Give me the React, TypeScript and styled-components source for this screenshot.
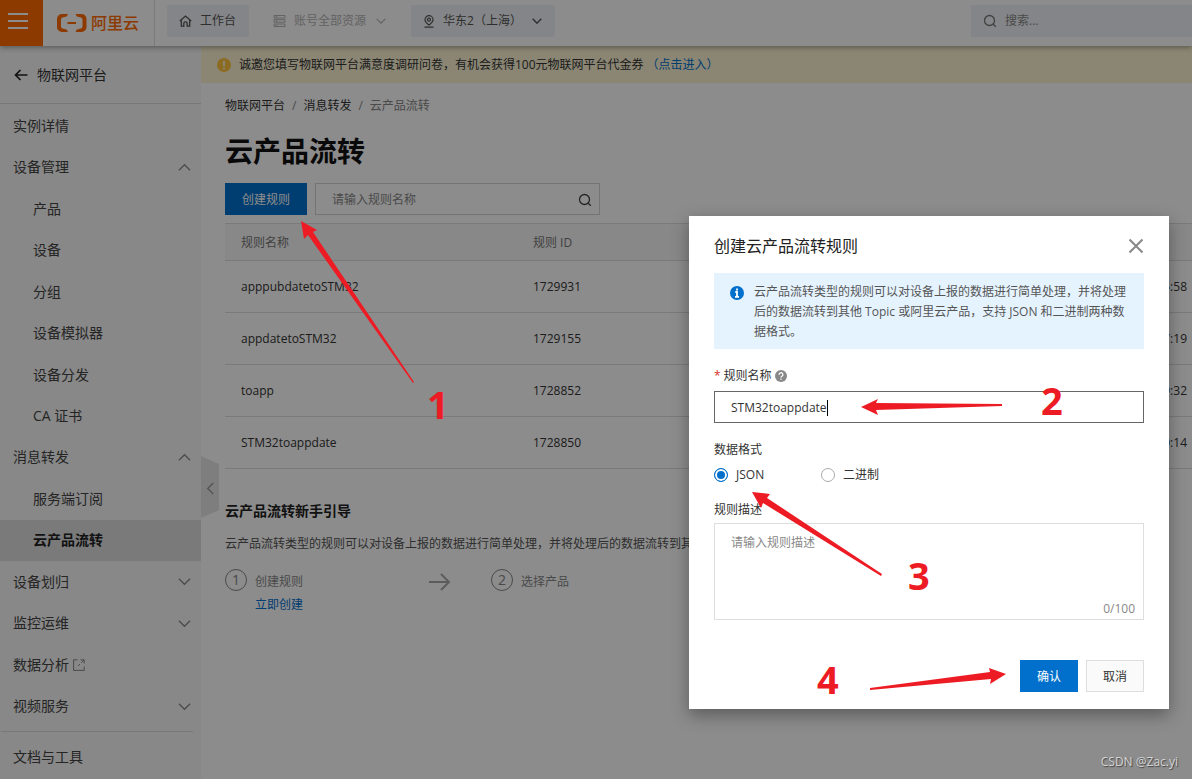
import React from "react";
import styled, { createGlobalStyle } from "styled-components";

const GlobalStyle = createGlobalStyle`
  *, *::before, *::after { box-sizing: border-box; }
  body {
    margin: 0;
    background: #fff;
    color: #333;
    font: 12px/20px "Open Sans", "Noto Sans CJK SC", sans-serif;
  }
  button, input, textarea { font: inherit; color: inherit; }
  button { cursor: pointer; }
  a { color: inherit; text-decoration: none; }
  h1, h2, p, ul, ol { margin: 0; padding: 0; }
  ul, ol { list-style: none; }
  svg { display: block; flex: none; }
`;

const Page = styled.div`
  position: relative;
  display: flex;
  flex-direction: column;
  min-height: 100vh;
  overflow: hidden;
`;

/* ---------- top bar ---------- */

const TopBar = styled.header`
  position: relative;
  z-index: 1;
  display: flex;
  align-items: center;
  height: 46px;
  background: #fff;
  box-shadow: 0 1px 6px rgba(0, 0, 0, 0.4);
`;

const MenuButton = styled.button`
  display: flex;
  justify-content: center;
  align-items: center;
  width: 43px;
  height: 46px;
  padding: 0 7px 4px 0;
  border: 0;
  background: #ff6a00;
`;

const Logo = styled.a`
  display: flex;
  align-items: center;
  gap: 4px;
  width: 112px;
  height: 46px;
  padding-left: 14px;
  border-right: 1px solid #dedede;
  color: #ff6a00;
  font-size: 16px;
  font-weight: 500;
`;

const TopButton = styled.button<{ $plain?: boolean }>`
  display: flex;
  align-items: center;
  gap: 8px;
  height: 32px;
  margin: 0 0 4px 12px;
  padding: 0 13px 0 12px;
  border: 0;
  border-radius: 2px;
  background: ${(p) => (p.$plain ? "transparent" : "#f0f3f7")};
  color: ${(p) => (p.$plain ? "#b4b4b4" : "#555")};
`;

const TopChevron = styled.span`
  padding-left: 2px;
`;

const TopSearch = styled.label`
  display: flex;
  align-items: center;
  gap: 8px;
  width: 221px;
  height: 32px;
  margin: 0 0 4px auto;
  padding-left: 12px;
  background: #f0f3f7;
  color: #777;
`;

const BareInput = styled.input`
  flex: 1;
  min-width: 0;
  padding: 0;
  border: 0;
  outline: 0;
  background: transparent;
  &::placeholder { color: #888; opacity: 1; }
`;

/* ---------- side navigation ---------- */

const Body = styled.div`
  display: flex;
  flex: 1;
`;

const Sidebar = styled.aside`
  position: relative;
  display: flex;
  flex-direction: column;
  flex: none;
  width: 201px;
  background: #f7f7f7;
  font-size: 14px;
`;

const SideTitle = styled.a`
  display: flex;
  align-items: center;
  gap: 9px;
  height: 58px;
  padding-left: 14px;
  border-bottom: 1px solid #dadada;
`;

const NavList = styled.ul`
  display: flex;
  flex-direction: column;
  flex: 1;
  padding: 1px 0 4px;
`;

const NavItem = styled.li`
  display: flex;
  flex: 1 0 40px;
`;

const NavLink = styled.a<{ $sub?: boolean; $active?: boolean }>`
  display: flex;
  flex: 1;
  align-items: center;
  gap: 4px;
  padding: 0 10px 0 ${(p) => (p.$sub ? 33 : 13)}px;
  background: ${(p) => (p.$active ? "#dedede" : "transparent")};
  color: ${(p) => (p.$active ? "#222" : "#444")};
  font-weight: ${(p) => (p.$active ? 700 : 400)};
`;

const NavChevron = styled.span`
  margin-left: auto;
  color: #888;
`;

const SideFooter = styled.div`
  height: 48px;
  margin: 0 8px 0 1px;
  padding: 15px 12px 0;
  border-top: 1px solid #dadada;
  color: #444;
`;

const CollapseHandle = styled.button`
  position: absolute;
  top: 410px;
  left: 201px;
  display: flex;
  align-items: center;
  justify-content: center;
  width: 18px;
  height: 62px;
  padding: 2px 0 0;
  border: 0;
  background: #e6e6e6;
  color: #999;
  clip-path: polygon(0 0, 100% 8px, 100% 54px, 0 100%);
`;

/* ---------- main column ---------- */

const Main = styled.main`
  flex: 1;
  min-width: 0;
`;

const Notice = styled.div`
  display: flex;
  align-items: center;
  gap: 8px;
  height: 37px;
  padding-left: 16px;
  background: #fdf5d3;
`;

const TextLink = styled.a`
  color: #0070cc;
`;

const NoticeLink = styled(TextLink)`
  margin-left: 3px;
`;

const Content = styled.div`
  padding: 13px 0 0 24px;
`;

const Crumbs = styled.ol`
  display: flex;
  color: #333;
`;

const Crumb = styled.li<{ $last?: boolean }>`
  color: ${(p) => (p.$last ? "#888" : "#333")};
  &:not(:first-child)::before {
    content: "/";
    margin: 0 7px;
    color: #888;
  }
`;

const Title = styled.h1`
  margin: 15px 0 12px;
  color: #111;
  font-size: 28px;
  line-height: 40px;
`;

const Toolbar = styled.div`
  display: flex;
  gap: 8px;
  margin-bottom: 8px;
`;

const Button = styled.button<{ $primary?: boolean }>`
  height: 32px;
  padding: 2px 16px 0;
  border: 1px solid ${(p) => (p.$primary ? "#0070cc" : "#dedede")};
  background: ${(p) => (p.$primary ? "#0070cc" : "#fafafa")};
  color: ${(p) => (p.$primary ? "#fff" : "#333")};
`;

const SearchBox = styled.label`
  display: flex;
  align-items: center;
  width: 285px;
  height: 32px;
  padding: 2px 7px 0 16px;
  border: 1px solid #d3d3d3;
`;

const Table = styled.table`
  width: 100%;
  table-layout: fixed;
  border-collapse: collapse;
  border-top: 1px solid #dfdfdf;
  text-align: left;
`;

const HeadCell = styled.th<{ $width?: number }>`
  width: ${(p) => (p.$width ? `${p.$width}px` : "auto")};
  height: 37px;
  padding: 2px 16px 0;
  border-bottom: 1px solid #dfdfdf;
  background: #f7f7f7;
  color: #777;
  font-weight: 400;
`;

const Cell = styled.td<{ $end?: boolean }>`
  height: 52px;
  padding: 0 ${(p) => (p.$end ? 5 : 16)}px 0 16px;
  border-bottom: 1px solid #dfdfdf;
  text-align: ${(p) => (p.$end ? "right" : "left")};
`;

const GuideTitle = styled.h2`
  margin: 32px 0 13px;
  color: #222;
  font-size: 14px;
  line-height: 20px;
`;

const GuideText = styled.p`
  color: #555;
  white-space: nowrap;
`;

const Steps = styled.ol`
  display: flex;
  gap: 40px;
  margin-top: 15px;
`;

const Step = styled.li`
  display: flex;
  gap: 8px;
  color: #888;
`;

const StepNumber = styled.span`
  width: 22px;
  height: 22px;
  border: 1px solid #888;
  border-radius: 50%;
  font-size: 14px;
  line-height: 20px;
  text-align: center;
`;

const StepBody = styled.div`
  display: flex;
  flex-direction: column;
  gap: 3px;
  width: 166px;
  padding-top: 3px;
`;

const StepArrow = styled.span`
  padding-top: 4px;
  color: #a8a8a8;
`;

/* ---------- dialog ---------- */

const Backdrop = styled.div`
  position: absolute;
  inset: 0;
  z-index: 2;
  display: flex;
  justify-content: flex-end;
  align-items: flex-end;
  padding: 0 23px 70px 0;
  background: rgba(0, 0, 0, 0.45);
`;

const Dialog = styled.form`
  display: flex;
  flex-direction: column;
  width: 480px;
  padding: 20px 25px 17px;
  background: #fff;
  box-shadow: 0 6px 16px rgba(0, 0, 0, 0.35);
`;

const DialogHead = styled.div`
  display: flex;
  justify-content: space-between;
  align-items: center;
  height: 20px;
  margin-bottom: 17px;
`;

const DialogTitle = styled.h2`
  color: #222;
  font-size: 16px;
  font-weight: 400;
`;

const CloseButton = styled.button`
  padding: 0;
  border: 0;
  background: transparent;
  color: #888;
`;

const Info = styled.div`
  display: flex;
  gap: 10px;
  padding: 9px 16px 7px;
  margin-bottom: 16px;
  background: #e5f3ff;
  color: #555;

  svg { margin-top: 4px; }
`;

const Label = styled.label`
  display: flex;
  align-items: center;
  gap: 3px;
  height: 20px;
  padding-top: 2px;
`;

const Required = styled.span`
  color: #d93026;
`;

const NameField = styled.div`
  display: flex;
  align-items: center;
  height: 32px;
  margin: 6px 0 16px;
  padding: 2px 16px 0;
  border: 1px solid #666;
`;

const NameInput = styled(BareInput)`
  flex: none;
  field-sizing: content;
`;

const Caret = styled.span`
  width: 1px;
  height: 16px;
  background: #000;
`;

const RadioGroup = styled.fieldset`
  display: flex;
  flex-wrap: wrap;
  margin: 0 0 14px;
  padding: 0;
  border: 0;
`;

const Legend = styled.legend`
  height: 26px;
  padding: 1px 0 0;
`;

const RadioLabel = styled.label`
  display: flex;
  align-items: center;
  gap: 8px;
  width: 107px;
  height: 20px;
`;

const Radio = styled.input`
  appearance: none;
  width: 14px;
  height: 14px;
  margin: 0;
  border: 1px solid #aaa;
  border-radius: 50%;
  background: #fff;
  &:checked {
    border-color: #0070cc;
    background: #0070cc;
    box-shadow: inset 0 0 0 2px #fff;
  }
`;

const DescField = styled.div`
  display: flex;
  flex-direction: column;
  height: 97px;
  margin: 4px 0 40px;
  padding: 9px 8px 0 16px;
  border: 1px solid #dedede;
`;

const DescInput = styled.textarea`
  flex: 1;
  min-height: 0;
  padding: 0;
  border: 0;
  outline: 0;
  resize: none;
  background: transparent;
  &::placeholder { color: #888; opacity: 1; }
`;

const Counter = styled.span`
  align-self: flex-end;
  color: #888;
`;

const Actions = styled.div`
  display: flex;
  justify-content: flex-end;
  gap: 8px;
`;

/* ---------- tutorial marks drawn over the page ---------- */

const Marks = styled.div`
  position: absolute;
  inset: 0;
  z-index: 3;
  overflow: hidden;
  pointer-events: none;
`;

const MarkNumber = styled.span<{ $x: number; $y: number }>`
  position: absolute;
  left: ${(p) => p.$x}px;
  top: ${(p) => p.$y}px;
  color: #ed1c24;
  font-size: 38px;
  font-weight: 700;
  line-height: 40px;
`;

const Watermark = styled.span`
  position: absolute;
  right: 14px;
  bottom: 7px;
  color: #d4d4d4;
  text-shadow: 1px 1px 1px #444;
`;

/* ---------- icons ---------- */

const Chevron = ({ dir, size = 14, width = 1 }: { dir: "up" | "down" | "left"; size?: number; width?: number }) => {
  const paths = {
    up: "M1 10l6-6 6 6",
    down: "M1 4l6 6 6-6",
    left: "M10 1L4 7l6 6",
  };
  return (
    <svg width={size} height={size} viewBox="0 0 14 14" fill="none" stroke="currentColor" strokeWidth={width}>
      <path d={paths[dir]} />
    </svg>
  );
};

const SearchIcon = ({ color = "currentColor" }: { color?: string }) => (
  <svg width="14" height="14" viewBox="0 0 14 14" fill="none" stroke={color} strokeWidth="1.3">
    <circle cx="6.5" cy="6.5" r="5" />
    <path d="M10.2 10.2l2.6 2.6" />
  </svg>
);

const LogoMark = () => (
  <svg width="30" height="18" viewBox="0 0 30 18" fill="#ff6a00">
    <path d="M11 0H5a5 5 0 0 0-5 5v8a5 5 0 0 0 5 5h6l-1.400-2.600-4.200-.9A2 2 0 0 1 4 12.600V5.400a2 2 0 0 1 1.400-1.900l4.200-.9z" />
    <path d="M18.500 0H24.500a5 5 0 0 1 5 5v8a5 5 0 0 1-5 5h-6l1.400-2.600 4.200-.9a2 2 0 0 0 1.400-1.900V5.400a2 2 0 0 0-1.400-1.900l-4.200-.9z" />
    <path d="M10.500 8h8.500v2h-8.500z" />
  </svg>
);

const HomeIcon = () => (
  <svg width="13" height="12" viewBox="0 0 13 12" fill="none" stroke="currentColor" strokeWidth="1.3">
    <path d="M.8 6L6.500 1l5.700 5M2.300 5.200v6h2.500V8.500a1.700 1.700 0 0 1 3.400 0v2.700h2.500v-6" />
  </svg>
);

const StackIcon = () => (
  <svg width="13" height="12" viewBox="0 0 13 12" fill="none" stroke="currentColor">
    <path d="M1 .500h11v2.500H1zM1 4.700h11v2.500H1zM1 9h11v2.500H1zM2.500 1.800h2M2.500 6h2M2.500 10.200h2" />
  </svg>
);

const PinIcon = () => (
  <svg width="12" height="13" viewBox="0 0 12 13" fill="none" stroke="currentColor" strokeWidth="1.200">
    <path d="M6 10C3.500 8.200 2 6.600 2 4.700a4 4 0 0 1 8 0C10 6.600 8.500 8.200 6 10zM1.500 12.200h9" />
    <circle cx="6" cy="4.700" r="1.500" />
  </svg>
);

const BackIcon = () => (
  <svg width="14" height="12" viewBox="0 0 14 12" fill="none" stroke="#222" strokeWidth="1.700">
    <path d="M13.500 6H1.500M6.500 1l-5 5 5 5" />
  </svg>
);

const ExternalIcon = () => (
  <svg width="12" height="12" viewBox="0 0 12 12" fill="none" stroke="#888">
    <path d="M4.500.8H.6v10.600h10.600V7.500M7.500.8h3.700v3.700M11 1L8.200 3.800M7 5L5 7" />
  </svg>
);

const RoundIcon = ({ size, color, kind }: { size: number; color: string; kind: "info" | "warn" | "help" }) => (
  <svg width={size} height={size} viewBox="0 0 14 14" fill="none" stroke="#fff">
    <circle cx="7" cy="7" r="7" fill={color} stroke="none" />
    {kind === "info" && <path d="M7 2.500v2M5.300 6H7v4.500M5 10.800h4" strokeWidth="1.800" />}
    {kind === "warn" && <path d="M7 3v5M7 9.500v1.700" strokeWidth="1.600" />}
    {kind === "help" && (
      <path d="M4.800 5.500a2.200 2.200 0 1 1 3.300 1.800C7.300 7.700 7 8 7 8.800M7 9.800v1.500" strokeWidth="1.500" />
    )}
  </svg>
);

/* ---------- data ---------- */

type NavEntry = {
  label: string;
  sub?: boolean;
  active?: boolean;
  external?: boolean;
  chevron?: "up" | "down";
};

const navEntries: NavEntry[] = [
  { label: "实例详情" },
  { label: "设备管理", chevron: "up" },
  { label: "产品", sub: true },
  { label: "设备", sub: true },
  { label: "分组", sub: true },
  { label: "设备模拟器", sub: true },
  { label: "设备分发", sub: true },
  { label: "CA 证书", sub: true },
  { label: "消息转发", chevron: "up" },
  { label: "服务端订阅", sub: true },
  { label: "云产品流转", sub: true, active: true },
  { label: "设备划归", chevron: "down" },
  { label: "监控运维", chevron: "down" },
  { label: "数据分析", external: true },
  { label: "视频服务", chevron: "down" },
];

const rules = [
  { name: "apppubdatetoSTM32", id: "1729931", time: "15:58" },
  { name: "appdatetoSTM32", id: "1729155", time: "17:19" },
  { name: "toapp", id: "1728852", time: "19:32" },
  { name: "STM32toappdate", id: "1728850", time: "10:14" },
];

const description =
  "云产品流转类型的规则可以对设备上报的数据进行简单处理，并将处理后的数据流转到其他 Topic 或阿里云产品，支持 JSON 和二进制两种数据格式。";

const arrows = [
  "301,221 317,230 313,232 414,382 413,383 308,235 304,239",
  "861,407 878,399 876,403 1002,404 1002,406 876,410 878,415",
  "752,492 770,494 767,498 882,574 881,576 763,503 761,508",
  "1006,674 989,668 990,672 870,688 870,690 991,679 990,684",
];

export default function App() {
  return (
    <>
      <GlobalStyle />
      <Page>
        <TopBar>
          <MenuButton type="button" aria-label="菜单">
            <svg width="20" height="16" viewBox="0 0 20 16" stroke="#fff" strokeWidth="2">
              <path d="M0 1h20M0 8h20M0 15h20" />
            </svg>
          </MenuButton>
          <Logo href="#">
            <LogoMark />
            阿里云
          </Logo>
          <TopButton type="button">
            <HomeIcon />
            工作台
          </TopButton>
          <TopButton type="button" $plain>
            <StackIcon />
            账号全部资源
            <TopChevron>
              <Chevron dir="down" size={10} width={1.7} />
            </TopChevron>
          </TopButton>
          <TopButton type="button">
            <PinIcon />
            华东2（上海）
            <TopChevron>
              <Chevron dir="down" size={10} width={2} />
            </TopChevron>
          </TopButton>
          <TopSearch>
            <SearchIcon />
            <BareInput aria-label="搜索" placeholder="搜索..." />
          </TopSearch>
        </TopBar>

        <Body>
          <Sidebar>
            <SideTitle href="#">
              <BackIcon />
              物联网平台
            </SideTitle>
            <NavList>
              {navEntries.map((entry) => (
                <NavItem key={entry.label}>
                  <NavLink href="#" $sub={entry.sub} $active={entry.active}>
                    {entry.label}
                    {entry.external && <ExternalIcon />}
                    {entry.chevron && (
                      <NavChevron>
                        <Chevron dir={entry.chevron} width={1.3} size={13} />
                      </NavChevron>
                    )}
                  </NavLink>
                </NavItem>
              ))}
            </NavList>
            <SideFooter>
              <a href="#">文档与工具</a>
            </SideFooter>
            <CollapseHandle type="button" aria-label="收起">
              <Chevron dir="left" width={1.5} size={13} />
            </CollapseHandle>
          </Sidebar>

          <Main>
            <Notice>
              <RoundIcon size={14} color="#ffc440" kind="warn" />
              <span>
                诚邀您填写物联网平台满意度调研问卷，有机会获得100元物联网平台代金券
                <NoticeLink href="#">（点击进入）</NoticeLink>
              </span>
            </Notice>
            <Content>
              <Crumbs>
                <Crumb><a href="#">物联网平台</a></Crumb>
                <Crumb><a href="#">消息转发</a></Crumb>
                <Crumb $last>云产品流转</Crumb>
              </Crumbs>
              <Title>云产品流转</Title>
              <Toolbar>
                <Button type="button" $primary>创建规则</Button>
                <SearchBox>
                  <BareInput aria-label="规则名称" placeholder="请输入规则名称" />
                  <SearchIcon color="#444" />
                </SearchBox>
              </Toolbar>
              <Table>
                <thead>
                  <tr>
                    <HeadCell $width={292}>规则名称</HeadCell>
                    <HeadCell $width={292}>规则 ID</HeadCell>
                    <HeadCell />
                  </tr>
                </thead>
                <tbody>
                  {rules.map((rule) => (
                    <tr key={rule.id}>
                      <Cell>{rule.name}</Cell>
                      <Cell>{rule.id}</Cell>
                      <Cell $end>{rule.time}</Cell>
                    </tr>
                  ))}
                </tbody>
              </Table>
              <GuideTitle>云产品流转新手引导</GuideTitle>
              <GuideText>{description}</GuideText>
              <Steps>
                <Step>
                  <StepNumber>1</StepNumber>
                  <StepBody>
                    创建规则
                    <TextLink href="#">立即创建</TextLink>
                  </StepBody>
                  <StepArrow>
                    <svg width="22" height="18" viewBox="0 0 22 18" fill="none" stroke="currentColor" strokeWidth="2">
                      <path d="M0 9h20M12 1l8 8-8 8" />
                    </svg>
                  </StepArrow>
                </Step>
                <Step>
                  <StepNumber>2</StepNumber>
                  <StepBody>选择产品</StepBody>
                </Step>
              </Steps>
            </Content>
          </Main>
        </Body>

        <Backdrop>
          <Dialog role="dialog" aria-labelledby="dialog-title">
            <DialogHead>
              <DialogTitle id="dialog-title">创建云产品流转规则</DialogTitle>
              <CloseButton type="button" aria-label="关闭">
                <svg width="16" height="16" viewBox="0 0 16 16" stroke="currentColor" strokeWidth="2">
                  <path d="M1.500 1.500l13 13M14.500 1.500l-13 13" />
                </svg>
              </CloseButton>
            </DialogHead>
            <Info>
              <RoundIcon size={14} color="#0070cc" kind="info" />
              <p>{description}</p>
            </Info>
            <Label htmlFor="rule-name">
              <Required>*</Required>
              规则名称
              <RoundIcon size={12} color="#888" kind="help" />
            </Label>
            <NameField>
              <NameInput id="rule-name" defaultValue="STM32toappdate" />
              <Caret />
            </NameField>
            <RadioGroup>
              <Legend>数据格式</Legend>
              <RadioLabel>
                <Radio type="radio" name="format" defaultChecked />
                JSON
              </RadioLabel>
              <RadioLabel>
                <Radio type="radio" name="format" />
                二进制
              </RadioLabel>
            </RadioGroup>
            <Label htmlFor="rule-desc">规则描述</Label>
            <DescField>
              <DescInput id="rule-desc" placeholder="请输入规则描述" />
              <Counter>0/100</Counter>
            </DescField>
            <Actions>
              <Button type="button" $primary>确认</Button>
              <Button type="button">取消</Button>
            </Actions>
          </Dialog>
        </Backdrop>

        <Marks>
          <svg width="100%" height="100%" fill="#ed1c24">
            {arrows.map((points) => (
              <polygon key={points} points={points} />
            ))}
          </svg>
          <MarkNumber $x={427} $y={384}>1</MarkNumber>
          <MarkNumber $x={1041} $y={380}>2</MarkNumber>
          <MarkNumber $x={908} $y={555}>3</MarkNumber>
          <MarkNumber $x={817} $y={659}>4</MarkNumber>
          <Watermark>CSDN @Zac.yi</Watermark>
        </Marks>
      </Page>
    </>
  );
}
